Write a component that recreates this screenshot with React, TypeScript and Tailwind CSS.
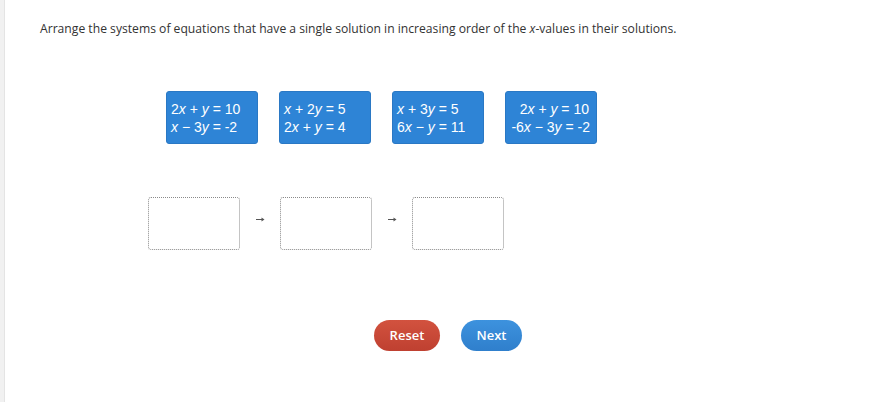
import React from 'react';

const V = ({ children }: { children: React.ReactNode }) => <i>{children}</i>;

const cards: { lines: React.ReactNode[]; right?: boolean }[] = [
  { lines: [<>2<V>x</V> + <V>y</V> = 10</>, <><V>x</V> − 3<V>y</V> = -2</>] },
  { lines: [<><V>x</V> + 2<V>y</V> = 5</>, <>2<V>x</V> + <V>y</V> = 4</>] },
  { lines: [<><V>x</V> + 3<V>y</V> = 5</>, <>6<V>x</V> − <V>y</V> = 11</>] },
  { lines: [<>2<V>x</V> + <V>y</V> = 10</>, <>-6<V>x</V> − 3<V>y</V> = -2</>], right: true },
];

function Card({ lines, right }: { lines: React.ReactNode[]; right?: boolean }) {
  return (
    <div className="w-[92px] h-[53px] rounded-[3px] bg-[#2e84d6] border border-[#2a78c4] text-white text-[14px] leading-[18px] flex flex-col justify-center font-['Liberation_Sans',sans-serif]">
      {right ? (
        <div className="self-end pr-[6px] text-right">
          {lines.map((l, i) => (
            <div key={i} className={i === 0 ? 'pr-[1px]' : ''}>{l}</div>
          ))}
        </div>
      ) : (
        <div className="pl-[4px]">
          {lines.map((l, i) => <div key={i}>{l}</div>)}
        </div>
      )}
    </div>
  );
}

function Slot() {
  return <div className="w-[92px] h-[53px] rounded-[3px] border border-dotted border-[#8a8a8a] bg-white" />;
}

function Arrow() {
  return (
    <div className="w-[40px] flex justify-center pb-[8px]">
      <svg width="9" height="5" viewBox="0 0 9 5">
        <path d="M0 2.5H7" stroke="#555" strokeWidth="1" />
        <path d="M5.5 0.5L8.5 2.5L5.5 4.5Z" fill="#555" />
      </svg>
    </div>
  );
}

export default function App() {
  return (
    <div className="w-[889px] h-[402px] flex bg-white font-['Open_Sans',sans-serif]">
      <div className="w-[5px] h-full bg-[#f1f1f1] border-r border-[#e4e4e4]" />
      <div className="flex-1 flex flex-col">
        <p className="pl-[35px] pt-[20px] text-[12.15px] leading-[18px] text-[#333]">
          Arrange the systems of equations that have a single solution in increasing order of the <i>x</i>-values in their solutions.
        </p>
        <div className="flex gap-[21px] pl-[161px] mt-[53px]">
          {cards.map((c, i) => <Card key={i} lines={c.lines} right={c.right} />)}
        </div>
        <div className="flex items-center pl-[143px] mt-[53px]">
          <Slot />
          <Arrow />
          <Slot />
          <Arrow />
          <Slot />
        </div>
        <div className="flex gap-[21px] pl-[369px] mt-[70px]">
          <button className="w-[66px] h-[31px] rounded-full bg-gradient-to-b from-[#d2523f] to-[#bf4030] text-white text-[13px] font-semibold">
            Reset
          </button>
          <button className="w-[61px] h-[31px] rounded-full bg-gradient-to-b from-[#3d92de] to-[#2f7fcc] text-white text-[13px] font-semibold">
            Next
          </button>
        </div>
      </div>
    </div>
  );
}
